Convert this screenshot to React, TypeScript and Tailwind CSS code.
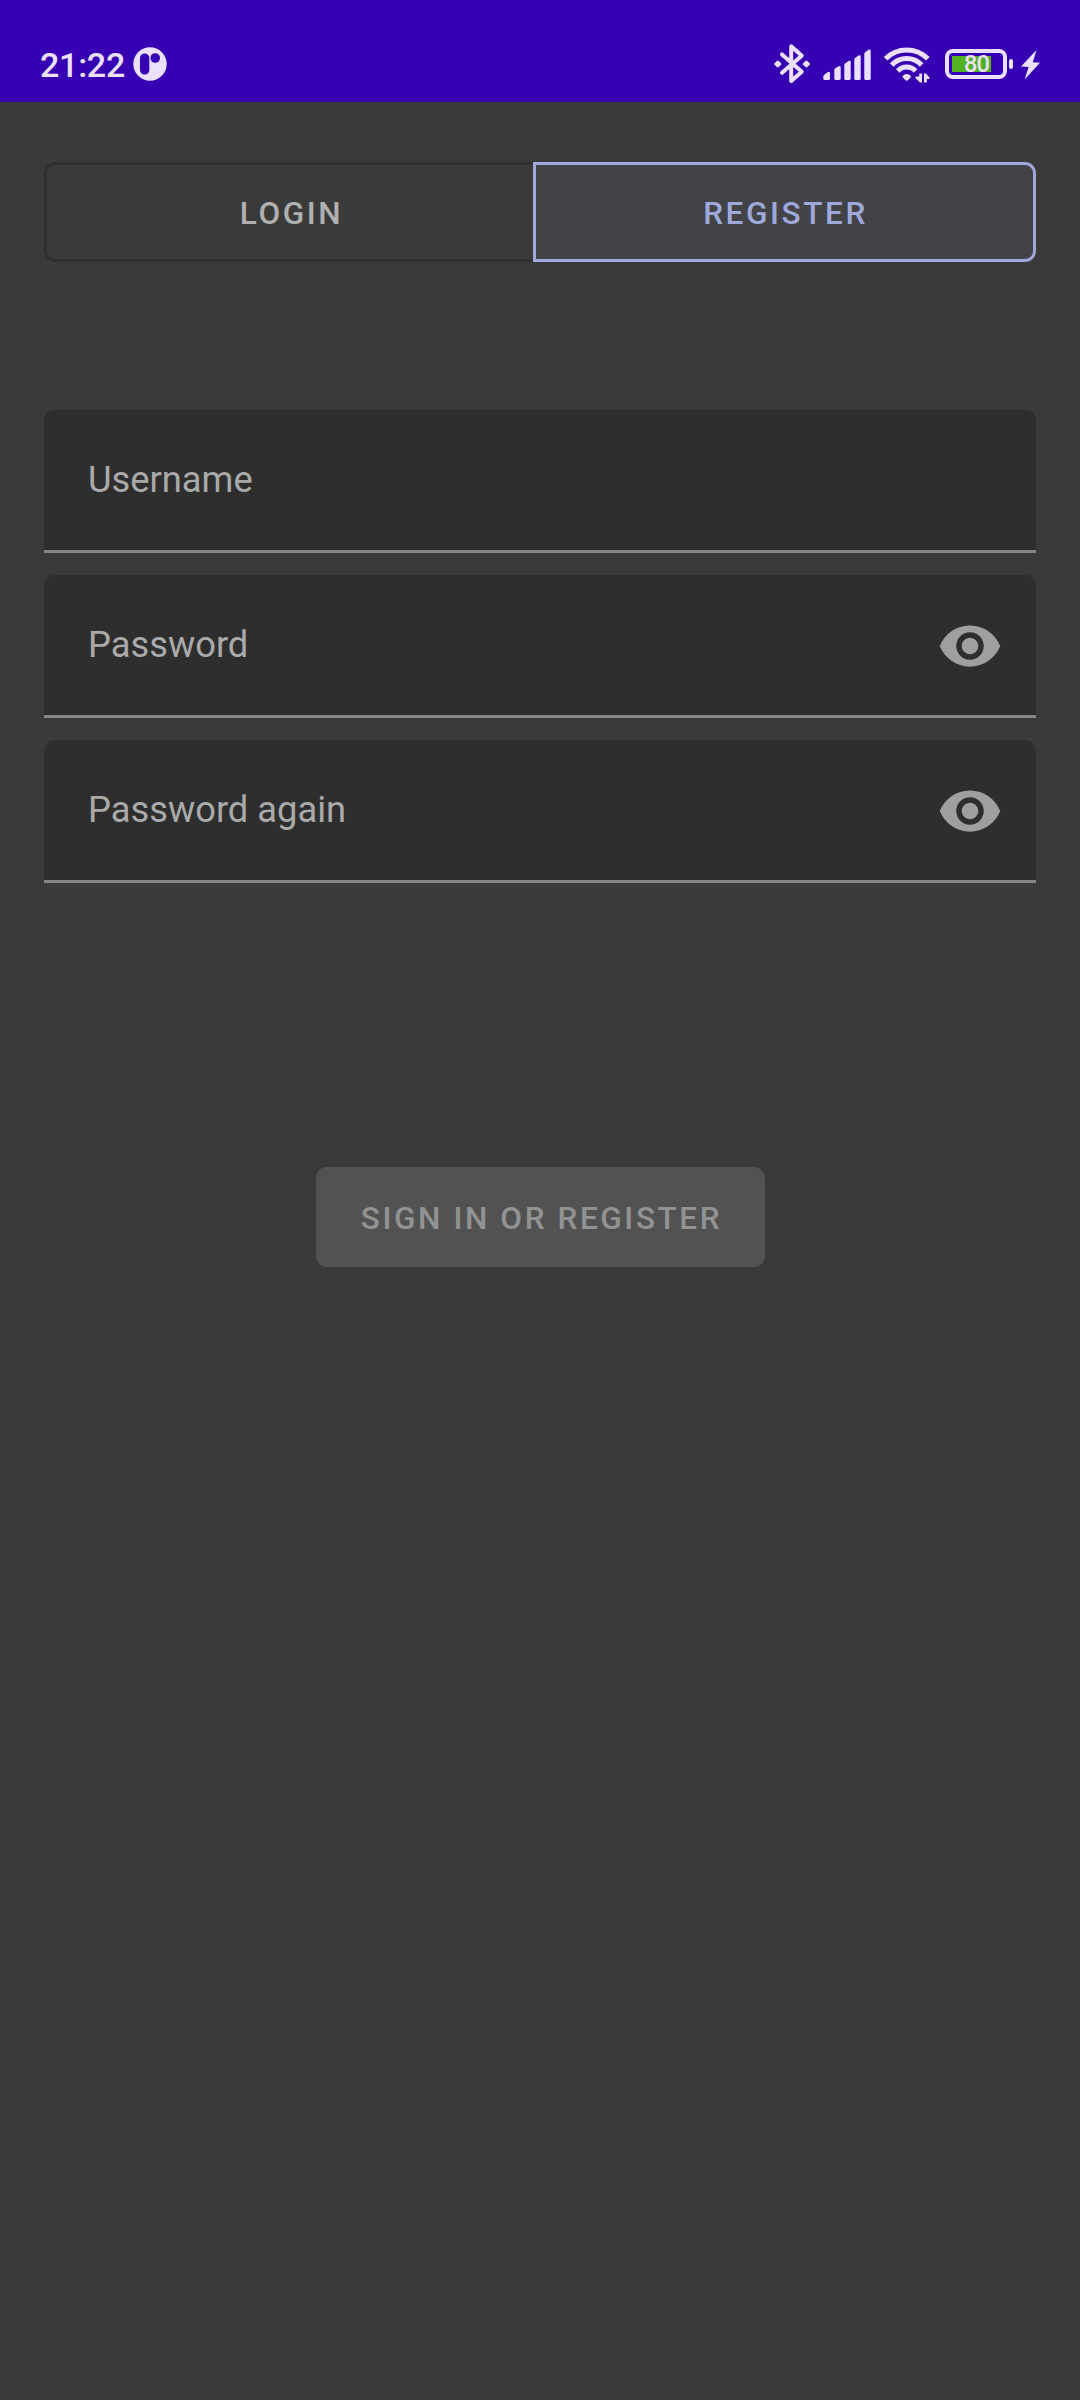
const EYE =
  "M12 4.5C7 4.5 2.73 7.61 1 12c1.73 4.39 6 7.5 11 7.5s9.27-3.11 11-7.5c-1.73-4.39-6-7.5-11-7.5zM12 17c-2.76 0-5-2.24-5-5s2.24-5 5-5 5 2.24 5 5-2.24 5-5 5zm0-8c-1.66 0-3 1.34-3 3s1.34 3 3 3 3-1.34 3-3-1.34-3-3-3z";

function StatusBar() {
  return (
    <header className="flex h-[102px] items-start bg-[#3700b3] pl-[40px] pt-[43px] text-[#ebe0fd]">
      <span className="mt-px w-[93px] text-[34px] font-medium leading-[43px] tracking-[-0.250px] whitespace-nowrap">21:22</span>
      <svg className="mt-[4px] h-[34px] w-[34px]" viewBox="0 0 34 34">
        <circle cx="17" cy="17" r="16.7" fill="currentColor" />
        <rect x="7" y="6.5" width="9.3" height="21" rx="4.6" fill="#3700b3" />
        <circle cx="22.2" cy="11" r="4.8" fill="#3700b3" />
      </svg>
      <div className="ml-[607px] flex items-start">
        <svg className="h-[41px] w-[37px]" viewBox="0 0 37 41" fill="none" stroke="currentColor" strokeWidth="4" strokeLinejoin="round" strokeLinecap="round">
          <path d="M8 11.400L27.800 28.800L17.200 38V3.200L27.800 12.700L8 29.800" />
          <path d="M3.800 18.800L6 21L3.800 23.200L1.600 21ZM32.400 18.800L34.600 21L32.400 23.200L30.200 21Z" fill="currentColor" strokeWidth="2.600" />
        </svg>
        <svg className="ml-[12px] h-[40px] w-[50px]" viewBox="0 0 50 40" fill="currentColor">
          <path d="M0.300 33.500Q0.300 32.600 1 32L4.500 29.200Q7 28 7 30.200V35.500Q7 37 5.500 37H1.800Q0.300 37 0.300 35.500Z" />
          <path d="M11.300 27Q11.300 26 12 25.500L15.500 23.300Q17.700 22.500 17.700 24.500V35.500Q17.700 37 16.200 37H12.800Q11.300 37 11.300 35.500Z" />
          <path d="M21.300 22Q21.300 21 22 20.500L25.500 18Q27.700 17 27.700 19V35.500Q27.700 37 26.200 37H22.800Q21.300 37 21.300 35.500Z" />
          <path d="M31.300 16.500Q31.300 15.500 32 15L35.500 12.500Q37.700 11.500 37.700 13.500V35.500Q37.700 37 36.200 37H32.800Q31.300 37 31.300 35.500Z" />
          <path d="M41.300 11Q41.300 10 42 9.500L45.500 6.800Q47.700 5.600 47.700 7.800V35.500Q47.700 37 46.200 37H42.800Q41.300 37 41.300 35.500Z" />
        </svg>
        <svg className="ml-[10px] h-[40px] w-[48px]" viewBox="0 0 48 40" fill="none" stroke="currentColor" strokeWidth="5">
          <path d="M2.600 15.800C14 4 33.400 4 44.800 15.800" />
          <path d="M8.700 22C16.800 13.300 30.600 13.300 38.700 22" />
          <path d="M14.800 28C19.400 22.800 28 22.800 32.600 28" />
          <path d="M19.300 33.200Q23.700 28.800 28.100 33.200Q28.100 34.500 23.700 38Q19.300 34.500 19.300 33.200Z" fill="currentColor" stroke="none" />
          <path d="M36.200 30.500H39V39.500H37L32.500 35V33.500H36.200ZM41 39.500V30.500H43L46.500 34.500V36H43.800V39.500Z" fill="currentColor" stroke="none" />
        </svg>
        <div className="ml-[14px] mt-[6px] flex items-center">
          <div className="flex h-[30px] w-[62px] items-center rounded-[8px] border-4 border-current pl-[3px]">
            <div className="flex h-[16px] w-[39px] items-center justify-end bg-[#51b120] pr-[2px] pt-px text-[23.500px] font-medium leading-none tracking-[-0.800px]">80</div>
          </div>
          <div className="ml-[2px] h-[10px] w-[4px] rounded-[2px] bg-current" />
        </div>
        <svg className="ml-[8px] mt-[7px] h-[30px] w-[20px]" viewBox="0 0 20 30" fill="currentColor">
          <path d="M15.500 0L0 16.500L7.600 17L3.600 29.500L19 12.800L11.800 12.300Z" />
        </svg>
      </div>
    </header>
  );
}

function Field({ label, secret = false }: { label: string; secret?: boolean }) {
  return (
    <div className="flex h-[143px] items-center justify-between rounded-t-[11px] border-b-[3px] border-[#878787] bg-[#2e2e2e] pl-[44px] pr-[33px] text-[#aaaaaa]">
      <span className="text-[36.300px] leading-[44px]">{label}</span>
      {secret && (
        <svg className="mt-[2px] h-[66px] w-[66px]" viewBox="0 0 24 24" fill="#9f9f9f">
          <path d={EYE} />
        </svg>
      )}
    </div>
  );
}

export default function App() {
  return (
    <div className="h-[2400px] w-[1080px] bg-[#3a3a3a] font-['Roboto',sans-serif]">
      <StatusBar />
      <main className="flex flex-col px-[44px] pt-[60px]">
        <div className="flex h-[100px] text-[31.500px] font-medium leading-[38px] tracking-[2.600px]">
          <button className="w-[489px] rounded-l-[11px] border-[3px] border-r-0 border-[#2f2f2f] pt-[3px] pl-[3px] text-[#b0b0b0]">LOGIN</button>
          <button className="w-[503px] rounded-r-[11px] border-[3px] border-[#9fa8da] bg-[#424347] pt-[3px] pl-[2px] text-[#9fa8da]">REGISTER</button>
        </div>
        <form className="mt-[148px] flex flex-col gap-[22px]">
          <Field label="Username" />
          <Field label="Password" secret />
          <Field label="Password again" secret />
        </form>
        <button className="mt-[284px] h-[100px] w-[449px] self-center rounded-[11px] bg-[#525252] pt-[3px] pl-[3px] text-[31.500px] font-medium leading-[38px] tracking-[2.600px] text-[#929292]">
          SIGN IN OR REGISTER
        </button>
      </main>
    </div>
  );
}
